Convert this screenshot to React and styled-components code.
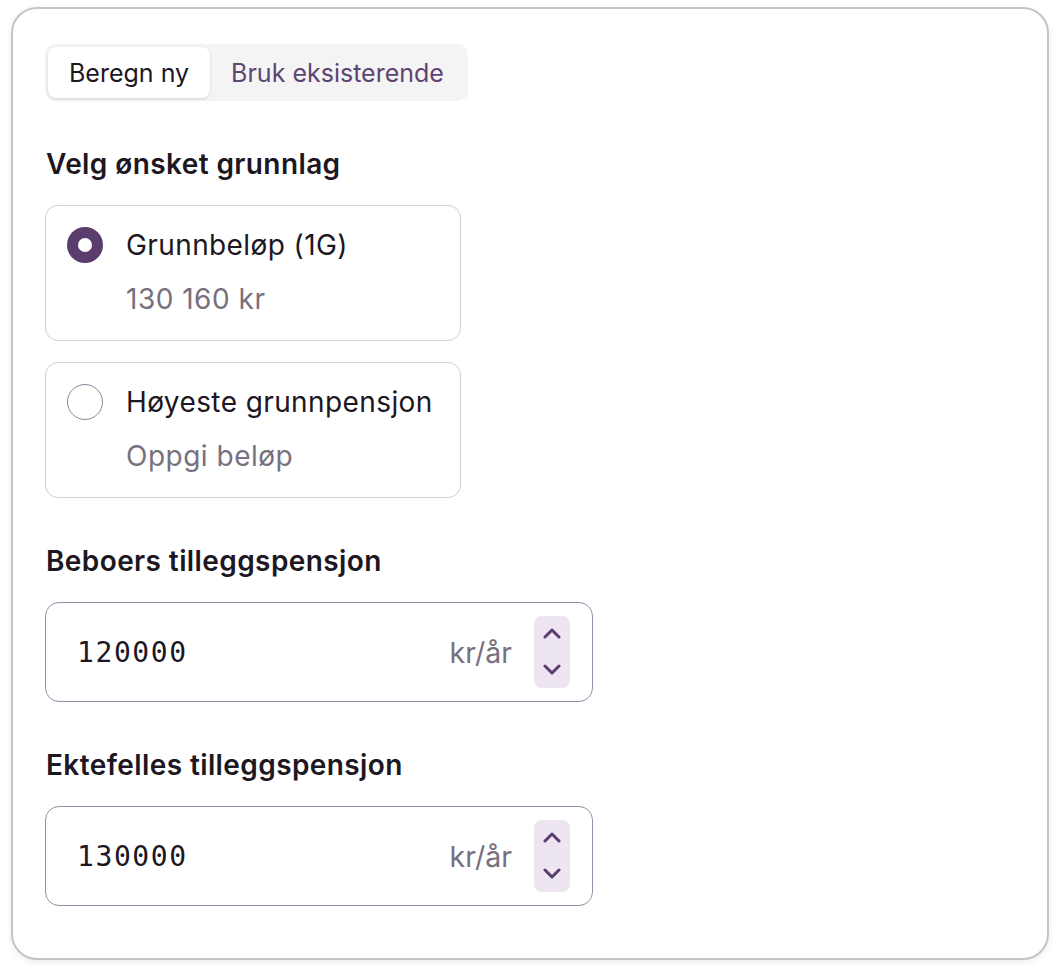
import React, { useState } from "react"
import styled, { createGlobalStyle } from "styled-components"

const GlobalStyle = createGlobalStyle`
  html, body {
    margin: 0;
    padding: 0;
    background: #ffffff;
    font-family: Inter, "Noto Sans", "Liberation Sans", sans-serif;
    color: #1c1722;
  }
`;

const Page = styled.div`
  padding: 7px 11px 15px 11px;
`;

const Card = styled.section`
  box-sizing: border-box;
  width: 1038px;
  height: 953px;
  border: 2px solid #c4c4c4;
  border-radius: 26px;
  box-shadow: 0 2px 6px rgba(0, 0, 0, 0.08);
  padding: 35px 32px 40px 32px;
  display: flex;
  flex-direction: column;
  align-items: flex-start;
`;

const Tabs = styled.div`
  display: flex;
  padding: 3px;
  border-radius: 10px;
  background: #f4f4f5;
`;

const Tab = styled.button`
  border: none;
  font-family: inherit;
  font-size: 25px;
  height: 51px;
  padding: 0 21px;
  border-radius: 8px;
  cursor: pointer;
  background: ${p => (p.$active ? "#ffffff" : "transparent")};
  color: ${p => (p.$active ? "#1c1722" : "#5e4470")};
  box-shadow: ${p => (p.$active ? "0 1px 3px rgba(0,0,0,0.14)" : "none")};
`;

const Heading = styled.h2`
  margin: 46px 0 24px 1px;
  font-size: 28px;
  line-height: 34px;
  letter-spacing: 0.4px;
  font-weight: 600;
  color: #1c1722;
`;

const Options = styled.div`
  display: flex;
  flex-direction: column;
  gap: 21px;
`;

const OptionCard = styled.label`
  box-sizing: border-box;
  width: 416px;
  height: 136px;
  border: 1px solid #d3ccd9;
  border-radius: 13px;
  padding: 21px 20px 0 21px;
  display: grid;
  grid-template-columns: 36px 1fr;
  align-content: start;
  column-gap: 23px;
  row-gap: 19px;
  align-items: center;
  cursor: pointer;
`;

const Radio = styled.span`
  box-sizing: border-box;
  width: 36px;
  height: 36px;
  border-radius: 50%;
  display: flex;
  align-items: center;
  justify-content: center;
  background: ${p => (p.$checked ? "#5a3d6d" : "#ffffff")};
  border: ${p => (p.$checked ? "none" : "1px solid #8f8399")};

  &::after {
    content: "";
    width: 14px;
    height: 14px;
    border-radius: 50%;
    background: #ffffff;
    display: ${p => (p.$checked ? "block" : "none")};
  }
`;

const OptionLabel = styled.span`
  font-size: 28px;
  line-height: 36px;
  letter-spacing: 0.4px;
  color: #1c1722;
`;

const OptionSub = styled.span`
  grid-column: 2;
  font-size: 28px;
  line-height: 34px;
  letter-spacing: 0.5px;
  color: #77707e;
`;

const InputBox = styled.div`
  box-sizing: border-box;
  width: 548px;
  height: 100px;
  border: 1px solid #9c8ba7;
  border-radius: 14px;
  display: flex;
  align-items: center;
  padding: 0 22px 0 31px;
`;

const Value = styled.input`
  flex: 1;
  min-width: 0;
  border: none;
  outline: none;
  background: transparent;
  font-family: "DejaVu Sans Mono", "Liberation Mono", monospace;
  font-size: 28px;
  letter-spacing: 1.6px;
  color: #1c1722;
  padding: 0;
`;

const Unit = styled.span`
  font-size: 28.5px;
  color: #77707e;
  margin-right: 22px;
`;

const Stepper = styled.div`
  box-sizing: border-box;
  width: 36px;
  height: 72px;
  border-radius: 8px;
  background: #ede5f1;
  display: flex;
  flex-direction: column;
  align-items: center;
  justify-content: space-between;
  padding: 6px 0 7px;
`;

const StepButton = styled.button`
  border: none;
  background: transparent;
  padding: 0;
  width: 26px;
  height: 22px;
  display: flex;
  align-items: center;
  justify-content: center;
  color: #5a3d6d;
  cursor: pointer;
`;

const Chevron = ({ up }) => (
  <svg width="18" height="12" viewBox="0 0 18 12" fill="none">
    <path
      d={up ? "M2 10L9 3L16 10" : "M2 2L9 9L16 2"}
      stroke="currentColor"
      strokeWidth="3"
      strokeLinecap="round"
      strokeLinejoin="round"
    />
  </svg>
);

const NumberField = ({ value, onChange }) => (
  <InputBox>
    <Value value={value} onChange={e => onChange(e.target.value)} />
    <Unit>kr/år</Unit>
    <Stepper>
      <StepButton onClick={() => onChange(String(Number(value) + 1000))}>
        <Chevron up />
      </StepButton>
      <StepButton onClick={() => onChange(String(Number(value) - 1000))}>
        <Chevron />
      </StepButton>
    </Stepper>
  </InputBox>
);

const options = [
  { id: "g", label: "Grunnbeløp (1G)", sub: "130 160 kr" },
  { id: "max", label: "Høyeste grunnpensjon", sub: "Oppgi beløp" },
];

const App = () => {
  const [tab, setTab] = useState("new");
  const [basis, setBasis] = useState("g");
  const [resident, setResident] = useState("120000");
  const [spouse, setSpouse] = useState("130000");

  return (
    <Page>
      <GlobalStyle />
      <Card>
        <Tabs>
          <Tab $active={tab === "new"} onClick={() => setTab("new")}>
            Beregn ny
          </Tab>
          <Tab $active={tab === "existing"} onClick={() => setTab("existing")}>
            Bruk eksisterende
          </Tab>
        </Tabs>

        <Heading>Velg ønsket grunnlag</Heading>
        <Options>
          {options.map(o => (
            <OptionCard key={o.id} onClick={() => setBasis(o.id)}>
              <Radio $checked={basis === o.id} />
              <OptionLabel>{o.label}</OptionLabel>
              <OptionSub>{o.sub}</OptionSub>
            </OptionCard>
          ))}
        </Options>

        <Heading>Beboers tilleggspensjon</Heading>
        <NumberField value={resident} onChange={setResident} />

        <Heading>Ektefelles tilleggspensjon</Heading>
        <NumberField value={spouse} onChange={setSpouse} />
      </Card>
    </Page>
  );
};

export default App
